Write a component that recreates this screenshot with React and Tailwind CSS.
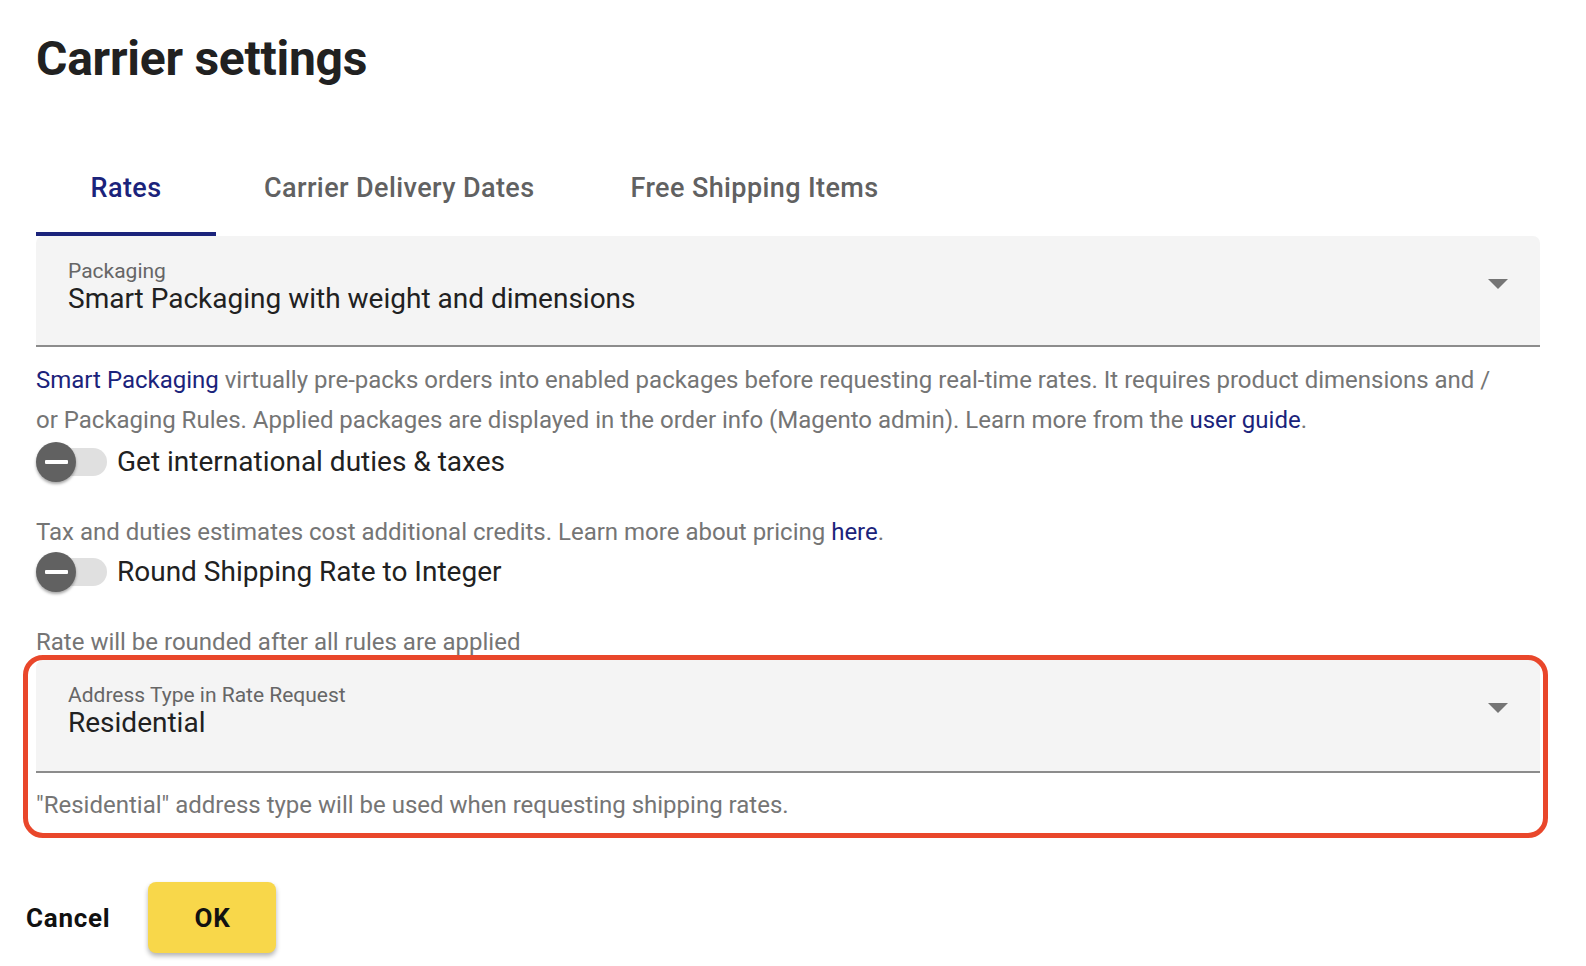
import { useState } from "react";

const tabs = ["Rates", "Carrier Delivery Dates", "Free Shipping Items"];

function CaretDown() {
  return (
    <svg width="20" height="10" viewBox="0 0 20 10" className="mt-[20px] shrink-0">
      <polygon points="0,0 20,0 10,10" fill="#757575" />
    </svg>
  );
}

function FilledSelect({ label, value, className = "" }) {
  return (
    <div
      className={`flex justify-between rounded-t-[7px] border-b-2 border-[#8c8c8c] bg-[#f4f4f4] pl-[32px] pr-[32px] pt-[23px] ${className}`}
    >
      <div className="flex flex-col">
        <span className="text-[21px] leading-[24px] text-[#666666]">{label}</span>
        <span className="text-[28px] leading-[32px] text-[#212121]">{value}</span>
      </div>
      <CaretDown />
    </div>
  );
}

function Toggle({ label, className = "" }) {
  const [on, setOn] = useState(false);
  return (
    <button type="button" onClick={() => setOn(!on)} className={`flex items-center text-left ${className}`}>
      <span className="relative flex h-[40px] w-[71px] items-center">
        <span className="ml-[2px] h-[28px] w-[69px] rounded-full bg-[#e0e0e0]" />
        <span className="absolute left-0 top-0 flex h-[40px] w-[40px] items-center justify-center rounded-full bg-[#616161] shadow-[0_2px_3px_rgba(0,0,0,0.35)]">
          <span className="h-[4px] w-[23px] rounded-[1px] bg-white" />
        </span>
      </span>
      <span className="ml-[10px] text-[28px] leading-[32px] text-[#212121]">{label}</span>
    </button>
  );
}

export default function App() {
  const [tab, setTab] = useState(0);

  return (
    <div className="min-h-screen bg-white pl-[36px] pr-[46px] pt-[31px] font-['Roboto',sans-serif]">
      <h1 className="text-[48px] font-bold leading-[56px] tracking-[-0.25px] text-[#212121]">Carrier settings</h1>

      <div className="mt-[63px] flex">
        {tabs.map((t, i) => (
          <button
            key={t}
            type="button"
            onClick={() => setTab(i)}
            className={`min-w-[180px] border-b-4 px-[48px] pb-[29px] pt-[23px] text-[27px] font-medium leading-[30px] tracking-[0.4px] ${
              tab === i ? "border-[#1b237b] text-[#1b237b]" : "border-transparent text-[#616161]"
            }`}
          >
            {t}
          </button>
        ))}
      </div>

      <FilledSelect label="Packaging" value="Smart Packaging with weight and dimensions" className="pb-[30px]" />

      <p className="mt-[13px] max-w-[1470px] text-[24px] leading-[40px] text-[#757575]">
        <a className="text-[#1b237b]">Smart Packaging</a> virtually pre-packs orders into enabled packages before
        requesting real-time rates. It requires product dimensions and / or Packaging Rules. Applied packages are
        displayed in the order info (Magento admin). Learn more from the <a className="text-[#1b237b]">user guide</a>.
      </p>

      <div className="flex flex-col">
        <Toggle label="Get international duties & taxes" className="mt-[2px]" />
        <p className="mt-[30px] text-[24px] leading-[40px] text-[#757575]">
          Tax and duties estimates cost additional credits. Learn more about pricing{" "}
          <a className="text-[#1b237b]">here</a>.
        </p>
        <Toggle label="Round Shipping Rate to Integer" />
        <p className="mt-[30px] text-[24px] leading-[40px] text-[#757575]">Rate will be rounded after all rules are applied</p>
      </div>

      <div className="relative -mt-[2px]">
        <FilledSelect label="Address Type in Rate Request" value="Residential" className="pb-[32px]" />
        <p className="mt-[16px] text-[24px] leading-[32px] text-[#757575]">
          "Residential" address type will be used when requesting shipping rates.
        </p>
        <div className="pointer-events-none absolute -bottom-[17px] -left-[13px] -right-[8px] -top-[5px] rounded-[20px] border-[5px] border-[#e9472b]" />
      </div>

      <div className="ml-[-10px] mt-[61px] flex items-center">
        <button type="button" className="text-[26px] font-bold leading-[30px] tracking-[0.75px] text-[#111111]">
          Cancel
        </button>
        <button
          type="button"
          className="ml-[38px] h-[71px] w-[128px] rounded-[8px] bg-[#f8d74a] text-[26px] font-bold leading-[30px] tracking-[0.75px] text-[#111111] shadow-[0_3px_5px_rgba(0,0,0,0.3)]"
        >
          OK
        </button>
      </div>
    </div>
  );
}
